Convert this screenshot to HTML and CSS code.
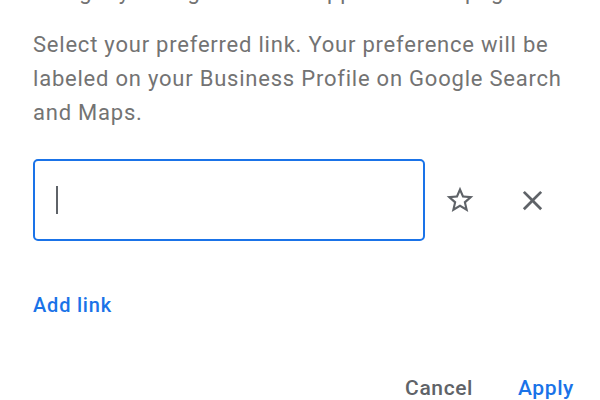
FILE: index.html
```html
<!DOCTYPE html>
<html lang="en">
<head>
<meta charset="utf-8">
<title>Preferred link</title>
<link rel="stylesheet" href="styles.css">
</head>
<body>
<div class="dialog">
  <p class="intro">Using my listing link could appear on the page.</p>
  <p class="desc">Select your preferred link. Your preference will be labeled on your Business Profile on Google Search and Maps.</p>
  <div class="row">
    <div class="field"><span class="caret"></span></div>
    <button class="icon star" aria-label="Set as preferred">
      <svg viewBox="0 0 24 24" width="32" height="32"><path d="M22 9.24l-7.19-.62L12 2 9.19 8.63 2 9.24l5.46 4.73L5.82 21 12 17.27 18.18 21l-1.63-7.03L22 9.24zM12 15.4l-3.76 2.27 1-4.28-3.32-2.88 4.38-.38L12 6.1l1.71 4.04 4.38.38-3.32 2.88 1 4.28L12 15.4z"/></svg>
    </button>
    <button class="icon close" aria-label="Remove">
      <svg viewBox="0 0 24 24" width="33" height="33"><path d="M19 6.41L17.59 5 12 10.59 6.41 5 5 6.41 10.59 12 5 17.59 6.41 19 12 13.41 17.59 19 19 17.59 13.41 12z"/></svg>
    </button>
  </div>
  <a class="add" href="#">Add link</a>
  <div class="actions">
    <button class="btn cancel">Cancel</button>
    <button class="btn apply">Apply</button>
  </div>
</div>
</body>
</html>
```

FILE: styles.css
```css
html, body {
  margin: 0;
  padding: 0;
  background: #ffffff;
  overflow: hidden;
}
body {
  font-family: Roboto, "Noto Sans", Arial, sans-serif;
  color: #737373;
}
.dialog {
  width: 600px;
  height: 400px;
  box-sizing: border-box;
  padding: 0 27px 0 33px;
  display: flex;
  flex-direction: column;
}
.intro, .desc {
  font-size: 22px;
  line-height: 34px;
  letter-spacing: 0.78px;
  margin: 0;
}
.intro {
  margin-top: -25px;
}
.desc {
  margin-top: 19px;
}
.row {
  display: flex;
  align-items: center;
  margin-top: 29px;
}
.field {
  width: 392px;
  height: 82px;
  box-sizing: border-box;
  border: 2.5px solid #1a73e8;
  border-radius: 5px;
  display: flex;
  align-items: center;
  padding-left: 21px;
}
.caret {
  width: 2px;
  height: 28px;
  background: #5f6368;
}
.icon {
  border: 0;
  background: none;
  padding: 0;
  display: flex;
  align-items: center;
  justify-content: center;
  fill: #5f6368;
}
.star {
  margin-left: 19px;
}
.close {
  margin-left: 40px;
}
.add {
  margin-top: 52px;
  align-self: flex-start;
  font-size: 20px;
  font-weight: 500;
  letter-spacing: 0.8px;
  color: #1a73e8;
  text-decoration: none;
  line-height: 24px;
}
.actions {
  display: flex;
  justify-content: flex-end;
  gap: 45px;
  margin-top: 59px;
}
.btn {
  border: 0;
  background: none;
  padding: 0;
  font-family: inherit;
  font-size: 21px;
  font-weight: 500;
  letter-spacing: 0.6px;
  line-height: 24px;
}
.cancel { color: #5f6368; }
.apply { color: #1a73e8; margin-right: -1px; }
```
